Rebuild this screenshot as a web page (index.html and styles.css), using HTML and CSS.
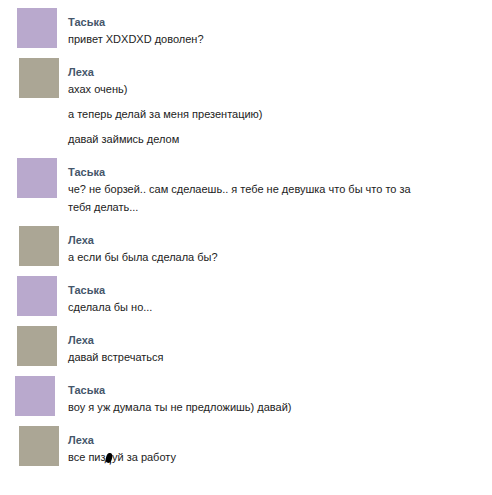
FILE: index.html
```html
<!DOCTYPE html>
<html lang="ru">
<head>
    <meta charset="UTF-8">
    <meta name="viewport" content="width=device-width, initial-scale=1.0">
    <title>Диалог</title>
    <link rel="stylesheet" href="styles.css">
</head>
<body>
    <div class="dialog">
        <div class="item">
            <div class="avatar avatar-tasya"></div>
            <div class="body">
                <div class="name">Таська</div>
                <div class="text">привет XDXDXD доволен?</div>
            </div>
        </div>

        <div class="item item-shift">
            <div class="avatar avatar-lekha"></div>
            <div class="body">
                <div class="name">Леха</div>
                <div class="text">ахах очень)</div>
                <div class="text text-extra">а теперь делай за меня презентацию)</div>
                <div class="text text-extra">давай займись делом</div>
            </div>
        </div>

        <div class="item">
            <div class="avatar avatar-tasya"></div>
            <div class="body">
                <div class="name">Таська</div>
                <div class="text">че? не борзей.. сам сделаешь.. я тебе не девушка что бы что то за тебя делать...</div>
            </div>
        </div>

        <div class="item item-shift">
            <div class="avatar avatar-lekha"></div>
            <div class="body">
                <div class="name">Леха</div>
                <div class="text">а если бы была сделала бы?</div>
            </div>
        </div>

        <div class="item">
            <div class="avatar avatar-tasya"></div>
            <div class="body">
                <div class="name">Таська</div>
                <div class="text">сделала бы но...</div>
            </div>
        </div>

        <div class="item">
            <div class="avatar avatar-lekha"></div>
            <div class="body">
                <div class="name">Леха</div>
                <div class="text">давай встречаться</div>
            </div>
        </div>

        <div class="item item-back">
            <div class="avatar avatar-tasya"></div>
            <div class="body">
                <div class="name">Таська</div>
                <div class="text">воу я уж думала ты не предложишь) давай)</div>
            </div>
        </div>

        <div class="item item-shift">
            <div class="avatar avatar-lekha"></div>
            <div class="body">
                <div class="name">Леха</div>
                <div class="text">все пиз<span class="blot">д</span>уй за работу</div>
            </div>
        </div>
    </div>
</body>
</html>
```

FILE: styles.css
```css
/* Диалог в стиле старого ВК */
body {
    margin: 0;
    background: #fff;
    font-family: "Liberation Sans", Tahoma, sans-serif;
    font-size: 11px;
    color: #222;
}
.dialog {
    width: 440px;
    padding: 8px 0 0 17px;
}
.item {
    display: flex;
    align-items: flex-start;
    margin-bottom: 10px;
}
.item-shift {
    padding-left: 2px;
}
.item-back {
    margin-left: -2px;
}
.avatar {
    flex: 0 0 40px;
    width: 40px;
    height: 40px;
}
.avatar-tasya {
    background: #b9a9cd;
}
.avatar-lekha {
    background: #aba695;
}
.body {
    flex: 1;
    margin-left: 11px;
    padding-top: 6px;
}
.item-shift .body {
    margin-left: 9px;
}
.item-back .body {
    margin-left: 13px;
}
.name {
    font-weight: bold;
    color: #45566a;
    line-height: 16px;
}
.text {
    max-width: 358px;
    line-height: 18px;
}
.text-extra {
    margin-top: 7px;
}
.blot {
    display: inline-block;
    background: #000;
    color: #000;
    border-radius: 50%;
    transform: rotate(15deg);
    line-height: 10px;
    vertical-align: -1px;
}
```
